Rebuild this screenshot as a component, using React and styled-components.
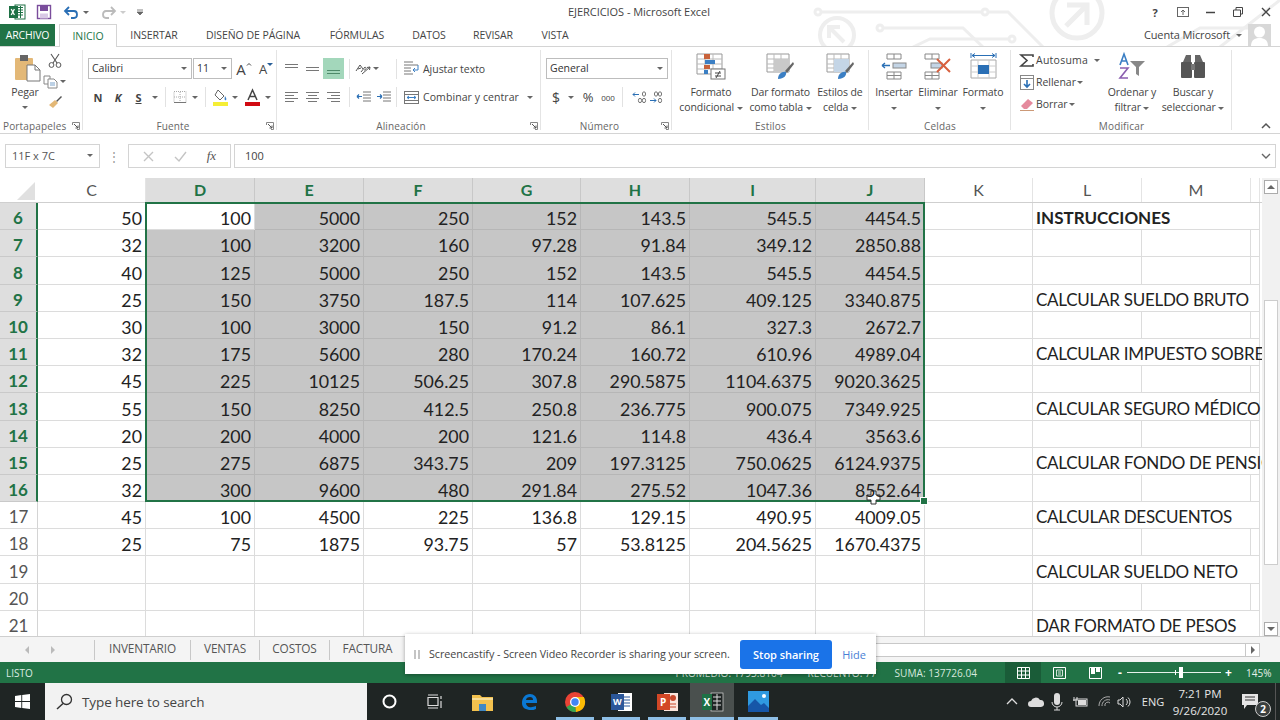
import React from "react";
import styled, { createGlobalStyle } from "styled-components";

const GREEN = "#217346";
const UI = `"Open Sans", "Noto Sans", sans-serif`;
const CELL = `"Lato", "Open Sans", sans-serif`;
const COLS = "38px 108px 109px 109px 109px 108px 109px 126px 109px 108px 109px 109px 9px";

const Global = createGlobalStyle`
  html, body { margin: 0; padding: 0; background: #fff; overflow: hidden; }
  #root { width: 1280px; height: 720px; }
  * { box-sizing: border-box; }
  svg { overflow: visible; flex: none; }
`;

const Shell = styled.div`
  position: relative; width: 1280px; height: 720px; overflow: hidden; display: flex; flex-direction: column;
  font-family: ${UI}; font-size: 10.5px; color: #444; background: #fff;
`;
const Watermark = styled.svg`position: absolute; left: 780px; top: 0; width: 500px; height: 47px; pointer-events: none; overflow: hidden;`;
const TitleBar = styled.div`position: relative; height: 24px; display: grid; grid-template-columns: 1fr auto 1fr; align-items: center;`;
const QuickAccess = styled.div`display: flex; align-items: center; padding-left: 9px;`;
const TitleText = styled.div`font-size: 11px; color: #444; letter-spacing: -0.05px; margin-left: -2px; padding-bottom: 1px;`;
const WindowButtons = styled.div`display: flex; align-items: center; justify-content: flex-end;`;
const Slot = styled.div`
  width: ${p => p.$w}px; flex: none; display: flex; align-items: center; justify-content: center;
  height: ${p => p.$h ? p.$h + "px" : "auto"}; background: ${p => p.$bg || "transparent"};
`;
const TabsRow = styled.div`position: relative; height: 23px; display: flex; align-items: stretch; border-bottom: 1px solid #d4d4d4;`;
const FileTab = styled.div`width: 55px; background: ${GREEN}; color: #fff; display: flex; align-items: center; justify-content: center; font-size: 10.5px; letter-spacing: -0.2px; margin-right: 4px;`;
const Tab = styled.div`
  width: ${p => p.$w}px; display: flex; align-items: center; justify-content: center; letter-spacing: -0.06px;
  color: ${p => p.$active ? GREEN : "#444"}; background: ${p => p.$active ? "#fff" : "transparent"};
  ${p => p.$active ? "border: 1px solid #d4d4d4; border-bottom: 0; margin-bottom: -1px;" : ""}
`;
const Spacer = styled.div`flex: 1;`;
const Account = styled.div`display: flex; align-items: center; gap: 6px; padding-right: 9px; font-size: 11px; letter-spacing: -0.12px; line-height: 20px;`;
const Avatar = styled.div`width: 23px; height: 22px; background: #d8d8d8; display: flex; justify-content: center; align-items: flex-end; overflow: hidden;`;

const Ribbon = styled.div`height: 87px; display: flex; border-bottom: 1px solid #d4d4d4; flex: none;`;
const Group = styled.div`
  width: ${p => p.$w}px; flex: none; display: flex; flex-direction: column; position: relative;
  &::after { content: ""; position: absolute; right: 0; top: 3px; bottom: 3px; width: 1px; background: #e4e4e4; }
`;
const GroupBody = styled.div`height: 71px; flex: none; display: flex; padding-left: ${p => p.$pl || 0}px;`;
const GroupLabel = styled.div`
  height: 15px; font-size: 10px; color: #666; letter-spacing: .15px; flex: none;
  display: flex; align-items: center; justify-content: ${p => p.$left ? "flex-start" : "center"};
  padding-left: ${p => p.$left ? 3 : 0}px; padding-right: ${p => p.$pr || 0}px;
`;
const Launcher = styled.svg`position: absolute; right: 3px; bottom: 3px; width: 8px; height: 8px;`;
const BigColumn = styled.div`width: ${p => p.$w}px; flex: none; display: flex; flex-direction: column; align-items: center; padding-top: ${p => p.$pt ?? 4}px;`;
const BigLabel = styled.div`font-size: 10.5px; line-height: 15px; text-align: center; white-space: nowrap; letter-spacing: -0.1px; color: #444;`;
const IconWrap = styled.div`height: 31px; display: flex; align-items: center; justify-content: center; margin-bottom: 3px;`;
const PasteWrap = styled.div`height: 29px; margin-left: 4px; margin-bottom: 2px;`;
const Stack = styled.div`display: flex; flex-direction: column; align-items: ${p => p.$align || "center"}; width: ${p => p.$w ? p.$w + "px" : "auto"}; flex: none; padding-top: ${p => p.$pt || 0}px; gap: ${p => p.$gap || 0}px;`;
const ToolRow = styled.div`display: flex; align-items: center; height: ${p => p.$h || 20}px; margin-top: ${p => p.$mt || 0}px;`;
const Caret = styled.span`display: inline-block; width: 0; height: 0; vertical-align: middle; border-left: 3px solid transparent; border-right: 3px solid transparent; border-top: 3px solid ${p => p.$c || "#666"}; flex: none;`;
const Select = styled.div`
  width: ${p => p.$w}px; height: 21px; border: 1px solid #bdbdbd; background: #fff; display: flex; align-items: center;
  justify-content: space-between; padding: 0 4px 1px 3px; font-size: 10.5px; color: #333; flex: none; margin-left: ${p => p.$ml || 0}px;
`;
const VSep = styled.div`width: 1px; height: 20px; background: #e2e2e2; flex: none;`;
const Letter = styled.span`font-weight: ${p => p.$light ? 400 : 700}; font-size: ${p => p.$size || 11}px; color: #444; font-style: ${p => p.$i ? "italic" : "normal"}; text-decoration: ${p => p.$u ? "underline" : "none"};`;
const GrowLetter = styled.span`font-size: ${p => p.$size}px; line-height: 16px; color: #444;`;
const ToolText = styled.span`font-size: 10.5px; color: #444; letter-spacing: ${p => p.$ls || -0.03}px; white-space: nowrap;`;
const CollapseSlot = styled.div`flex: 1; display: flex; justify-content: flex-end; align-items: flex-end; padding: 0 9px 4px 0;`;

const FormulaArea = styled.div`height: 44px; flex: none; display: flex; align-items: flex-start; padding: 10px 4px 0 5px;`;
const NameBox = styled.div`width: 95px; height: 24px; border: 1px solid #d4d4d4; display: flex; align-items: center; justify-content: space-between; padding: 0 6px 1px; font-size: 11px; color: #555; flex: none;`;
const Dots = styled.div`width: 28px; height: 24px; display: flex; align-items: center; justify-content: center; color: #999; flex: none; font-size: 12px;`;
const FxBox = styled.div`width: 103px; height: 24px; border: 1px solid #d4d4d4; display: flex; align-items: center; justify-content: space-around; padding: 0 4px; flex: none; margin-right: 3px;`;
const FxText = styled.span`font-family: "Liberation Serif", serif; font-style: italic; font-size: 13px; color: #555;`;
const FormulaInput = styled.div`flex: 1; height: 24px; border: 1px solid #d4d4d4; display: flex; align-items: center; justify-content: space-between; padding: 0 4px 1px 10px; font-size: 11px; color: #444;`;

const SheetArea = styled.div`flex: none; height: 458px; display: flex;`;
const GridArea = styled.div`width: 1262px; flex: none; position: relative; display: flex; flex-direction: column; font-family: ${CELL};`;
const HeaderRow = styled.div`height: 25px; display: grid; grid-template-columns: ${COLS}; flex: none; border-bottom: 1px solid #cfcfcf;`;
const Corner = styled.div`display: flex; align-items: flex-end; justify-content: flex-end; padding: 0 3px 2px 0; background: #fff;`;
const ColHead = styled.div`
  display: flex; align-items: center; justify-content: center; font-size: 16px; padding-bottom: 1px;
  color: ${p => p.$sel ? GREEN : "#555"}; font-weight: ${p => p.$sel ? 700 : 400};
  background: ${p => p.$sel ? "#dedede" : "#fff"}; border-right: 1px solid ${p => p.$sel ? "#c8c8c8" : "#e4e4e4"};
`;
const GridBody = styled.div`height: 433px; overflow: hidden; flex: none;`;
const SheetRow = styled.div`height: 27.2px; display: grid; grid-template-columns: ${COLS};`;
const RowHead = styled.div`
  display: flex; align-items: flex-end; justify-content: center; font-size: 17px; padding-bottom: 1px; line-height: 20px;
  color: ${p => p.$sel ? GREEN : "#555"}; font-weight: ${p => p.$sel ? 700 : 400};
  background: ${p => p.$sel ? "#dedede" : "#fff"};
  border-bottom: 1px solid ${p => p.$sel ? "#c9c9c9" : "#dcdcdc"};
  border-right: ${p => p.$sel ? `2px solid ${GREEN}` : "1px solid #d4d4d4"};
`;
const Cell = styled.div`
  display: flex; align-items: flex-end; justify-content: ${p => p.$text ? "flex-start" : "flex-end"}; font-size: ${p => p.$text ? 17 : 17.8}px; line-height: 21px;
  padding: 0 3px ${p => p.$text ? 1 : 0}px 3px; color: #222; white-space: nowrap; position: relative; font-weight: ${p => p.$bold ? 700 : 400};
  background: ${p => p.$sel ? "#c6c6c6" : "#fff"};
  border-bottom: 1px solid ${p => p.$sel ? "#b6b6b6" : "#dcdcdc"};
  border-right: ${p => p.$noRight ? "0" : `1px solid ${p.$sel ? "#b6b6b6" : "#dcdcdc"}`};
`;
const CellText = styled.span`letter-spacing: ${p => p.$ls || 0}px; position: relative; z-index: 2;`;
const Selection = styled.div`position: absolute; left: 145px; top: 24px; width: 780px; height: 300px; border: 2px solid ${GREEN}; pointer-events: none;`;
const Handle = styled.div`position: absolute; right: -4px; bottom: -4px; width: 6px; height: 6px; background: ${GREEN}; outline: 1px solid #fff;`;
const CursorPlus = styled.svg`position: absolute; left: 866px; top: 312px; width: 15px; height: 15px;`;
const VScroll = styled.div`width: 18px; flex: none; display: flex; flex-direction: column; align-items: center; padding-top: 2px; background: #f1f1f1;`;
const ScrollButton = styled.div`width: 14px; height: 14px; background: #fff; border: 1px solid #ababab; display: flex; align-items: center; justify-content: center; flex: none;`;
const Thumb = styled.div`width: 14px; height: 266px; background: #fff; border: 1px solid #cdcdcd; margin: 106px 0 57px;`;
const UpTri = styled.span`width: 0; height: 0; border-left: 4px solid transparent; border-right: 4px solid transparent; border-bottom: 4px solid #666;`;
const DownTri = styled.span`width: 0; height: 0; border-left: 4px solid transparent; border-right: 4px solid transparent; border-top: 4px solid #666;`;

const SheetTabs = styled.div`height: 26px; flex: none; display: flex; align-items: center; background: #f4f4f4; border-top: 1px solid #cfcfcf;`;
const NavArrows = styled.div`width: 94px; display: flex; align-items: center; padding-left: 25px; gap: 22px; flex: none;`;
const SheetTab = styled.div`
  width: ${p => p.$w}px; height: 20px; display: flex; align-items: center; justify-content: center; flex: none; font-size: 11.8px; letter-spacing: -0.15px; color: #555; padding-bottom: 3px;
  border-left: 1px solid #c8c8c8;
`;
const HScroll = styled.div`margin-left: auto; margin-right: 20px; width: 390px; height: 14px; background: #fff; border: 1px solid #c8c8c8; display: flex; justify-content: flex-end;`;
const HEnd = styled.div`width: 14px; border-left: 1px solid #c8c8c8; display: flex; align-items: center; justify-content: center;`;
const LeftTri = styled.span`width: 0; height: 0; border-top: 4px solid transparent; border-bottom: 4px solid transparent; border-right: 4px solid #bbb;`;
const RightTri = styled.span`width: 0; height: 0; border-top: 4px solid transparent; border-bottom: 4px solid transparent; border-left: 4px solid ${p => p.$c || "#bbb"};`;

const Status = styled.div`height: 21px; flex: none; background: ${GREEN}; color: #dcebe3; font-size: 10px; display: flex; align-items: center; padding-left: 6px;`;
const StatusStat = styled.span`white-space: nowrap; font-size: 10.1px; color: #d6e8de;`;
const ZoomLevel = styled.span`white-space: nowrap; font-size: 10px; color: #e6f0ea; width: 26px; flex: none;`;
const ViewButton = styled.div`width: 36px; height: 21px; display: flex; align-items: center; justify-content: center; background: ${p => p.$active ? "#1a5c38" : "transparent"}; flex: none;`;
const Slider = styled.div`width: 94px; height: 1px; background: #e8f1ec; position: relative; margin: 0 4px 0 5px; flex: none;`;
const SliderKnob = styled.div`position: absolute; left: 52px; top: -5px; width: 4px; height: 11px; background: #fff;`;
const SliderTick = styled.div`position: absolute; left: 48px; top: -2px; width: 1px; height: 5px; background: #fff;`;
const ZoomSign = styled.span`color: #fff; font-weight: 700; font-size: 12px; line-height: 12px; width: ${p => p.$w}px; text-align: center; flex: none;`;

const Taskbar = styled.div`height: 37px; flex: none; background: #1f2524; display: flex; align-items: center; color: #e6e6e6;`;
const StartBtn = styled.div`width: 45px; height: 37px; display: flex; align-items: center; justify-content: center; flex: none;`;
const SearchBox = styled.div`width: 322px; height: 37px; background: #f2f2f2; display: flex; align-items: center; gap: 9px; padding-left: 11px; font-size: 13.5px; color: #444; flex: none; letter-spacing: -0.1px;`;
const TaskItem = styled.div`
  width: ${p => p.$w || 46}px; height: 37px; display: flex; align-items: center; justify-content: center; position: relative; flex: none;
  background: ${p => p.$active ? "#4a504e" : "transparent"}; padding-right: ${p => p.$pr || 0}px;
  ${p => p.$open ? `&::after { content: ""; position: absolute; left: ${p.$active ? 0 : 4}px; right: ${p.$active ? 0 : 4}px; bottom: 0; height: 3px; background: #8ebfe6; }` : ""}
`;
const Tray = styled.div`margin-left: auto; display: flex; align-items: center; height: 37px; margin-right: 4px; border-right: 1px solid #555;`;
const Clock = styled.div`width: 68px; text-align: center; font-size: 11.5px; line-height: 17px; color: #e6e6e6; flex: none; white-space: nowrap;`;
const Eng = styled.div`font-size: 11px; width: 26px; text-align: center; flex: none;`;
const NotifBadge = styled.div`position: absolute; right: 4px; bottom: 3px; width: 16px; height: 16px; border-radius: 50%; background: #3a3f3e; border: 1px solid #ccc; font-size: 10px; font-weight: 700; color: #fff; display: flex; align-items: center; justify-content: center;`;

const Cast = styled.div`position: absolute; left: 405px; top: 634px; width: 471px; height: 40px; background: #fff; display: flex; align-items: center; box-shadow: 0 1px 4px rgba(0,0,0,.35); font-size: 10.75px; color: #444; letter-spacing: -0.05px;`;
const CastPause = styled.div`width: 24px; display: flex; justify-content: center; gap: 2px; flex: none;`;
const PauseBar = styled.span`width: 2px; height: 9px; background: #c4c4c4;`;
const CastText = styled.div`width: 311px; white-space: nowrap; flex: none;`;
const StopButton = styled.div`width: 92px; height: 29px; border-radius: 3px; background: #1a73e8; color: #fff; font-weight: 600; display: flex; align-items: center; justify-content: center; flex: none; font-size: 11px;`;
const HideLink = styled.div`flex: 1; text-align: center; color: #4a7fd6; font-size: 11px;`;

const Svg = ({ w, h, children, ...r }) => <svg width={w} height={h} viewBox={`0 0 ${w} ${h}`} {...r}>{children}</svg>;

const ExcelLogo = () => (
  <Svg w={16} h={16}>
    <rect x="6" y="1" width="10" height="14" fill="#fff" stroke="#1e7145" />
    <path d="M9 3.5h5M9 6h5M9 8.5h5M9 11h5M11.5 2v12" stroke="#1e7145" strokeWidth="1" />
    <rect x="0" y="2" width="9" height="12" fill="#1e7145" />
    <path d="M2.2 5l3.2 6M5.4 5l-3.2 6" stroke="#fff" strokeWidth="1.3" />
  </Svg>
);
const Lines = ({ rows, w = 14, h = 12, c = "#777" }) => (
  <Svg w={w} h={h}>
    {rows.map(([y, x0, x1], i) => <path key={i} d={`M${x0} ${y + .5}H${x1}`} stroke={c} />)}
  </Svg>
);
const LaunchIcon = () => (
  <Launcher viewBox="0 0 8 8"><path d="M.5 3V.5H7.5V7.5H5" fill="none" stroke="#888" /><path d="M2 2L6 6M6 3.5V6H3.5" fill="none" stroke="#555" /></Launcher>
);

const Paste = () => (
  <Svg w={27} h={28}>
    <rect x="1" y="4" width="18" height="22" rx="1" fill="#e3b877" />
    <rect x="6" y="1" width="8" height="6" fill="#666" />
    <path d="M13 11h8l5 5v11H13z" fill="#fff" stroke="#777" />
    <path d="M21 11v5h5" fill="none" stroke="#777" />
  </Svg>
);
const Scissors = () => (
  <Svg w={14} h={15}><path d="M3 1l6 9M11 1L5 10" stroke="#555" strokeWidth="1.1" fill="none" /><circle cx="3.5" cy="12" r="2.4" fill="none" stroke="#555" /><circle cx="10.5" cy="12" r="2.4" fill="none" stroke="#555" /></Svg>
);
const Copy = () => (
  <Svg w={15} h={14}><path d="M1 1h6v8H1z" fill="#fff" stroke="#888" /><path d="M5 4h6l3 3v6H5z" fill="#fff" stroke="#888" /><path d="M7 8h5M7 10h5" stroke="#7aa3cc" /></Svg>
);
const Brush = () => (
  <Svg w={15} h={14}><path d="M8 6l5-5 1 1-5 5z" fill="#555" /><path d="M1 10l6-5 3 3-5 5z" fill="#e3b877" /></Svg>
);
const Borders = () => (
  <Svg w={14} h={14}><rect x="1" y="1.5" width="12" height="11" fill="none" stroke="#aaa" strokeDasharray="1 1" /><path d="M7 2v10M1 7h12" stroke="#aaa" strokeDasharray="1 1" /><path d="M1 12.5h12" stroke="#777" /></Svg>
);
const Bucket = () => (
  <Svg w={17} h={17}><path d="M6 1l6 6-4 4-5-5z" fill="#fff" stroke="#666" /><path d="M13 7c1 2 2 3 1 4s-2 0-1-4z" fill="#3b7fc4" /><rect x="1" y="13" width="15" height="4" fill="#f5ee35" /></Svg>
);
const FontColor = () => (
  <Svg w={15} h={17}><path d="M3 11L7.5 1 12 11M5 7.5h5" fill="none" stroke="#444" strokeWidth="1.5" /><rect y="13" width="15" height="4" fill="#d10a12" /></Svg>
);
const Orient = () => (
  <Svg w={17} h={14}><path d="M1 9l4-6 3 4M3 7l3-1M6 10l4-5c2 1 1 3-1 3M7 12L15 5M15 5l-3 .5M15 5l-.5 3" stroke="#555" fill="none" /></Svg>
);
const Wrap = () => (
  <Svg w={16} h={15}><path d="M1 1h9M1 4h14M1 7h7M1 10h7M1 13h9" stroke="#777" /><path d="M15 4v5h-5m2-2l-2 2 2 2" stroke="#3b7fc4" fill="none" /></Svg>
);
const Merge = () => (
  <Svg w={15} h={15}><rect x=".5" y="1.5" width="14" height="12" fill="#fff" stroke="#777" /><path d="M.5 4.5h14M.5 10.5h14" stroke="#777" /><path d="M3 7.5h9M3 7.5l2-1.5M3 7.5L5 9M12 7.5L10 6M12 7.5L10 9" stroke="#3b7fc4" fill="none" /></Svg>
);
const Indent = ({ rev }) => (
  <Svg w={15} h={12}><path d="M7 1h8M7 4h8M7 7h8M7 10h8" stroke="#777" /><path d={rev ? "M1 5.5h5M6 5.5L4 3.5M6 5.5L4 7.5" : "M1 5.5h5M1 5.5L3 3.5M1 5.5L3 7.5"} stroke="#2a6fb5" fill="none" strokeWidth="1.2" /></Svg>
);
const Zero = ({ x, y }) => <ellipse cx={x} cy={y} rx="1.6" ry="2.2" fill="none" stroke="#666" strokeWidth=".9" />;
const DecIncrease = () => (
  <Svg w={15} h={12}><Zero x={11} y={3} /><Zero x={7} y={9.5} /><Zero x={11} y={9.5} /><path d="M0 3.5h6M0 3.5l2-2M0 3.5l2 2" stroke="#2a6fb5" fill="none" /></Svg>
);
const DecDecrease = () => (
  <Svg w={15} h={12}><Zero x={7} y={3} /><Zero x={11} y={3} /><Zero x={11} y={9.5} /><path d="M1 9.5h6M7 9.5l-2-2M7 9.5l-2 2" stroke="#2a6fb5" fill="none" /></Svg>
);
const CondFormat = () => (
  <Svg w={30} h={27}>
    <path d="M1 1h25v20H1z" fill="#fff" stroke="#999" /><path d="M1 6h25M1 11h25M1 16h25M9 1v20M17 1v20" stroke="#bbb" />
    <rect x="8" y="1" width="6" height="5" fill="#c8623a" /><rect x="9" y="7" width="10" height="4" fill="#3b7fc4" /><rect x="8" y="12" width="6" height="4" fill="#c8623a" /><rect x="8" y="17" width="4" height="4" fill="#3b7fc4" />
    <rect x="15" y="16" width="14" height="10" fill="#fff" stroke="#777" /><path d="M19 20h6M19 23h6M24 18l-4 7" stroke="#444" />
  </Svg>
);
const TableFormat = ({ light }) => (
  <Svg w={29} h={27}>
    <path d="M1 1h22v18H1z" fill="#fff" stroke="#999" /><path d="M1 6h22M1 11h22M1 15h22M8 1v18M15 1v18" stroke="#bbb" />
    <rect x="8" y="6" width="15" height="13" fill={light ? "#c4d5e6" : "#c9c9c9"} />
    <path d="M19 18l8-9 1 2-7 9z" fill="#666" /><path d="M12 26c0-5 4-8 8-7 1 3-2 7-8 7z" fill="#3b7fc4" />
  </Svg>
);
const InsertCells = () => (
  <Svg w={26} h={27}>
    <path d="M6 1h14v5H6zM13 1v5M6 19h14v7H6zM13 19v7M6 22.5h14" fill="none" stroke="#888" />
    <rect x="12" y="10" width="13" height="5" fill="#c4d5e6" stroke="#888" /><path d="M1 12.5h8M1 12.5l3-2.5M1 12.5l3 2.5" stroke="#2a6fb5" fill="none" strokeWidth="1.3" />
  </Svg>
);
const DeleteCells = () => (
  <Svg w={28} h={27}>
    <path d="M1 1h14v5H1zM8 1v5M1 19h14v7H1zM8 19v7M1 22.5h14" fill="none" stroke="#888" />
    <rect x="7" y="10" width="11" height="5" fill="#c4d5e6" stroke="#888" /><path d="M13 6l13 13M26 6L13 19" stroke="#d8603f" strokeWidth="2" />
  </Svg>
);
const FormatCells = () => (
  <Svg w={27} h={30}>
    <path d="M1 1v5M26 1v5M2 3.5h23M2 3.5l3-2M2 3.5l3 2M25 3.5l-3-2M25 3.5l-3 2" stroke="#2a6fb5" fill="none" />
    <path d="M1 8h25v18H1z" fill="#fff" stroke="#aaa" /><path d="M1 14h25M1 20h25M8 8v18M19 8v18" stroke="#ccc" />
    <rect x="8" y="13" width="11" height="9" fill="#2a6fb5" />
  </Svg>
);
const Sigma = () => <Svg w={14} h={13}><path d="M13 3V1H1l6 5.5L1 12h12v-2" fill="none" stroke="#444" strokeWidth="1.6" /></Svg>;
const Fill = () => <Svg w={14} h={15}><rect x=".5" y=".5" width="13" height="14" fill="#fff" stroke="#888" /><path d="M.5 3.5h13" stroke="#888" /><path d="M7 5v7M4 9l3 3 3-3" stroke="#2a6fb5" strokeWidth="1.6" fill="none" /></Svg>;
const Eraser = () => <Svg w={14} h={13}><path d="M1 8l7-7 5 4-6 6H4z" fill="#e58a9d" /><path d="M0 12.5h14" stroke="#c97" /></Svg>;
const SortFilter = () => (
  <Svg w={28} h={27}>
    <path d="M2 12L6 1l4 11M3.5 8h5" fill="none" stroke="#3b7fc4" strokeWidth="1.6" />
    <path d="M2 15h8L2 25h8" fill="none" stroke="#8b5fb0" strokeWidth="1.6" />
    <path d="M12 8h15l-6 6v9l-3-2v-7z" fill="#888" />
  </Svg>
);
const Binoculars = () => (
  <Svg w={26} h={25}><path d="M3 8l3-7h5v7zM15 8V1h5l3 7z" fill="#666" /><rect x="1" y="8" width="11" height="16" rx="1" fill="#555" /><rect x="14" y="8" width="11" height="16" rx="1" fill="#555" /><rect x="11" y="10" width="4" height="6" fill="#777" /></Svg>
);

const Circuit = () => (
  <Watermark viewBox="0 0 500 47">
    <g fill="none" stroke="#eeeeee" strokeWidth="3">
      <circle cx="38" cy="12" r="3" />
      <path d="M41 12H202" />
      <circle cx="205" cy="12" r="3" />
      <path d="M208 12H228L263 47" />
      <circle cx="100" cy="28" r="3" />
      <path d="M103 28H183L203 47" />
      <circle cx="232" cy="39" r="3" />
      <path d="M229 39H150L133 47" />
      <circle cx="57" cy="35" r="17" strokeWidth="4" />
      <path d="M49 38V27H60M49 27L64 42" strokeWidth="4" />
      <circle cx="297" cy="13" r="25" strokeWidth="5" />
      <path d="M287 5h20v20M307 5L286 26" strokeWidth="5" />
      <path d="M387 47L420 28H480" />
      <path d="M440 47L500 0" />
    </g>
  </Watermark>
);

const columns = ["C", "D", "E", "F", "G", "H", "I", "J", "K", "L", "M"];
const rows = [
  [6, [50, 100, 5000, 250, 152, 143.5, 545.5, 4454.5], "INSTRUCCIONES", true],
  [7, [32, 100, 3200, 160, 97.28, 91.84, 349.12, 2850.88]],
  [8, [40, 125, 5000, 250, 152, 143.5, 545.5, 4454.5]],
  [9, [25, 150, 3750, 187.5, 114, 107.625, 409.125, 3340.875], "CALCULAR SUELDO BRUTO"],
  [10, [30, 100, 3000, 150, 91.2, 86.1, 327.3, 2672.7]],
  [11, [32, 175, 5600, 280, 170.24, 160.72, 610.96, 4989.04], "CALCULAR IMPUESTO SOBRE"],
  [12, [45, 225, 10125, 506.25, 307.8, 290.5875, 1104.6375, 9020.3625]],
  [13, [55, 150, 8250, 412.5, 250.8, 236.775, 900.075, 7349.925], "CALCULAR SEGURO MÉDICO"],
  [14, [20, 200, 4000, 200, 121.6, 114.8, 436.4, 3563.6]],
  [15, [25, 275, 6875, 343.75, 209, 197.3125, 750.0625, 6124.9375], "CALCULAR FONDO DE PENSIONES"],
  [16, [32, 300, 9600, 480, 291.84, 275.52, 1047.36, 8552.64]],
  [17, [45, 100, 4500, 225, 136.8, 129.15, 490.95, 4009.05], "CALCULAR DESCUENTOS"],
  [18, [25, 75, 1875, 93.75, 57, 53.8125, 204.5625, 1670.4375]],
  [19, [], "CALCULAR SUELDO NETO"],
  [20, []],
  [21, [], "DAR FORMATO DE PESOS"],
];

const SheetRowView = ({ n, vals, note, bold }) => {
  const selRow = n >= 6 && n <= 16;
  return (
    <SheetRow>
      <RowHead $sel={selRow}>{n}</RowHead>
      {Array.from({ length: 8 }).map((_, i) => (
        <Cell key={i} $sel={selRow && i >= 1 && !(n === 6 && i === 1)}><CellText>{vals[i]}</CellText></Cell>
      ))}
      <Cell />
      <Cell $text $bold={bold} $noRight={!!note}><CellText $ls={bold ? 0 : -0.27}>{note}</CellText></Cell>
      <Cell $noRight={!!note} />
      <Cell />
    </SheetRow>
  );
};

export default function App() {
  return (
    <Shell>
      <Global />
      <Circuit />
      <TitleBar>
        <QuickAccess>
          <ExcelLogo />
          <Slot $w={12} />
          <Svg w={14} h={14}><rect x=".5" y=".5" width="13" height="13" fill="#fff" stroke="#7a4d9c" strokeWidth="1.4" /><rect x="3" y="1" width="8" height="5" fill="#7a4d9c" /><rect x="3" y="8.5" width="8" height="5" fill="#d9c9e6" /></Svg>
          <Slot $w={13} />
          <Svg w={15} h={13}><path d="M2 5h8c4 0 4 7 0 7H7" fill="none" stroke="#2a6fb5" strokeWidth="1.8" /><path d="M5 1L1 5l4 4" fill="none" stroke="#2a6fb5" strokeWidth="1.8" /></Svg>
          <Slot $w={14}><Caret /></Slot>
          <Slot $w={8} />
          <Svg w={15} h={13}><path d="M13 5H5c-4 0-4 7 0 7h3" fill="none" stroke="#bbb" strokeWidth="1.8" /><path d="M10 1l4 4-4 4" fill="none" stroke="#bbb" strokeWidth="1.8" /></Svg>
          <Slot $w={13}><Caret $c="#ccc" /></Slot>
          <Slot $w={8} />
          <Svg w={7} h={7}><path d="M0 1h6M0 3l3 3 3-3z" stroke="#666" fill="#666" strokeWidth=".8" /></Svg>
        </QuickAccess>
        <TitleText>EJERCICIOS - Microsoft Excel</TitleText>
        <WindowButtons>
          <Slot $w={28}><Letter>?</Letter></Slot>
          <Slot $w={28}><Svg w={12} h={10}><rect x=".5" y=".5" width="11" height="9" fill="none" stroke="#666" /><path d="M6 8V3M4 5l2-2 2 2M1 .5h10" stroke="#666" fill="none" /></Svg></Slot>
          <Slot $w={27}><Svg w={9} h={3}><path d="M0 1.5h9" stroke="#444" strokeWidth="1.5" /></Svg></Slot>
          <Slot $w={28}><Svg w={10} h={10}><path d="M.5 3h7v6.5h-7zM3 3V.5h6.5V7H8" fill="none" stroke="#444" /></Svg></Slot>
          <Slot $w={28}><Svg w={10} h={10}><path d="M1 1l8 8M9 1L1 9" stroke="#444" strokeWidth="1.4" /></Svg></Slot>
        </WindowButtons>
      </TitleBar>

      <TabsRow>
        <FileTab>ARCHIVO</FileTab>
        <Tab $w={58} $active>INICIO</Tab>
        <Tab $w={74}>INSERTAR</Tab>
        <Tab $w={124}>DISEÑO DE PÁGINA</Tab>
        <Tab $w={84}>FÓRMULAS</Tab>
        <Tab $w={60}>DATOS</Tab>
        <Tab $w={68}>REVISAR</Tab>
        <Tab $w={56}>VISTA</Tab>
        <Spacer />
        <Account>
          Cuenta Microsoft <Caret />
          <Avatar><Svg w={17} h={21}><circle cx="8.5" cy="7" r="5.5" fill="#fff" /><path d="M0 21c0-6 4-8 8.5-8S17 15 17 21z" fill="#fff" /></Svg></Avatar>
        </Account>
      </TabsRow>

      <Ribbon>
        <Group $w={83}>
          <GroupBody $pl={9}>
            <BigColumn $w={32} $pt={7}>
              <PasteWrap><Paste /></PasteWrap>
              <BigLabel>Pegar</BigLabel>
              <Slot $w={10} $h={14}><Caret /></Slot>
            </BigColumn>
            <Stack $w={28} $pt={6} $gap={6}>
              <Scissors />
              <ToolRow $h={15}><Copy /><Slot $w={10}><Caret /></Slot></ToolRow>
              <Brush />
            </Stack>
          </GroupBody>
          <GroupLabel $left>Portapapeles</GroupLabel>
          <LaunchIcon />
        </Group>

        <Group $w={194}>
          <GroupBody $pl={5}>
            <Stack $align="flex-start" $pt={11}>
              <ToolRow $h={21}>
                <Select $w={104}>Calibri<Caret /></Select>
                <Select $w={39} $ml={1}>11<Caret /></Select>
                <Slot $w={24}><GrowLetter $size={15}>A</GrowLetter><Svg w={6} h={4} style={{ marginBottom: 9 }}><path d="M1 3.5l2-2 2 2" stroke="#444" fill="none" /></Svg></Slot>
                <Slot $w={20}><GrowLetter $size={13}>A</GrowLetter><Svg w={6} h={4} style={{ marginBottom: 9 }}><path d="M0 1h6L3 4z" fill="#2a6099" /></Svg></Slot>
              </ToolRow>
              <ToolRow $h={20} $mt={8}>
                <Slot $w={20}><Letter>N</Letter></Slot>
                <Slot $w={20}><Letter $i>K</Letter></Slot>
                <Slot $w={21}><Letter $u>S</Letter></Slot>
                <Slot $w={11}><Caret /></Slot>
                <Slot $w={10}><VSep /></Slot>
                <Slot $w={19}><Borders /></Slot>
                <Slot $w={12}><Caret /></Slot>
                <Slot $w={8}><VSep /></Slot>
                <Slot $w={22}><Bucket /></Slot>
                <Slot $w={8}><Caret /></Slot>
                <Slot $w={26}><FontColor /></Slot>
                <Slot $w={6}><Caret /></Slot>
              </ToolRow>
            </Stack>
          </GroupBody>
          <GroupLabel $pr={14}>Fuente</GroupLabel>
          <LaunchIcon />
        </Group>

        <Group $w={264}>
          <GroupBody $pl={5}>
            <Stack $align="flex-start" $pt={11}>
              <ToolRow $h={21}>
                <Slot $w={20}><Lines rows={[[1, 0, 13], [4, 0, 13]]} /></Slot>
                <Slot $w={21}><Lines rows={[[4, 0, 13], [7, 0, 13]]} /></Slot>
                <Slot $w={21} $h={21} $bg="#a3d7bb"><Lines rows={[[7, 0, 13], [10, 0, 13]]} c="#4e8a6a" /></Slot>
                <Slot $w={10}><VSep /></Slot>
                <Slot $w={18}><Orient /></Slot>
                <Slot $w={8}><Caret /></Slot>
                <Slot $w={16} />
                <VSep />
                <Slot $w={5} />
                <Slot $w={18}><Wrap /></Slot>
                <Slot $w={3} />
                <ToolText>Ajustar texto</ToolText>
              </ToolRow>
              <ToolRow $h={20} $mt={8}>
                <Slot $w={20}><Lines rows={[[1, 0, 13], [4, 0, 9], [7, 0, 13], [10, 0, 9]]} /></Slot>
                <Slot $w={21}><Lines rows={[[1, 0, 13], [4, 2, 11], [7, 0, 13], [10, 2, 11]]} /></Slot>
                <Slot $w={21}><Lines rows={[[1, 0, 13], [4, 4, 13], [7, 0, 13], [10, 4, 13]]} /></Slot>
                <Slot $w={10}><VSep /></Slot>
                <Slot $w={18}><Indent /></Slot>
                <Slot $w={22}><Indent rev /></Slot>
                <Slot $w={2} />
                <VSep />
                <Slot $w={5} />
                <Slot $w={18}><Merge /></Slot>
                <Slot $w={3} />
                <ToolText $ls={0.08}>Combinar y centrar</ToolText>
                <Slot $w={22}><Caret /></Slot>
              </ToolRow>
            </Stack>
          </GroupBody>
          <GroupLabel $pr={16}>Alineación</GroupLabel>
          <LaunchIcon />
        </Group>

        <Group $w={131}>
          <GroupBody $pl={5}>
            <Stack $align="flex-start" $pt={11}>
              <ToolRow $h={21}><Select $w={122}>General<Caret /></Select></ToolRow>
              <ToolRow $h={20} $mt={8}>
                <Slot $w={20}><Letter $light $size={14}>$</Letter></Slot>
                <Slot $w={10}><Caret /></Slot>
                <Slot $w={24}><Letter $light $size={13}>%</Letter></Slot>
                <Slot $w={16}><Letter $light $size={8}>000</Letter></Slot>
                <Slot $w={12}><VSep /></Slot>
                <Slot $w={4} />
                <Slot $w={16}><DecIncrease /></Slot>
                <Slot $w={16}><DecDecrease /></Slot>
              </ToolRow>
            </Stack>
          </GroupBody>
          <GroupLabel $pr={14}>Número</GroupLabel>
          <LaunchIcon />
        </Group>

        <Group $w={197}>
          <GroupBody $pl={2}>
            <BigColumn $w={74}><IconWrap><CondFormat /></IconWrap><BigLabel>Formato<br />condicional <Caret /></BigLabel></BigColumn>
            <BigColumn $w={65}><IconWrap><TableFormat /></IconWrap><BigLabel>Dar formato<br />como tabla <Caret /></BigLabel></BigColumn>
            <BigColumn $w={54}><IconWrap><TableFormat light /></IconWrap><BigLabel>Estilos de<br />celda <Caret /></BigLabel></BigColumn>
          </GroupBody>
          <GroupLabel>Estilos</GroupLabel>
        </Group>

        <Group $w={142}>
          <GroupBody $pl={3}>
            <BigColumn $w={44}><IconWrap><InsertCells /></IconWrap><BigLabel>Insertar<br /><Caret /></BigLabel></BigColumn>
            <BigColumn $w={44}><IconWrap><DeleteCells /></IconWrap><BigLabel>Eliminar<br /><Caret /></BigLabel></BigColumn>
            <BigColumn $w={46}><IconWrap><FormatCells /></IconWrap><BigLabel>Formato<br /><Caret /></BigLabel></BigColumn>
          </GroupBody>
          <GroupLabel>Celdas</GroupLabel>
        </Group>

        <Group $w={221}>
          <GroupBody $pl={7}>
            <Stack $align="flex-start" $w={87} $pt={2}>
              <ToolRow $h={22}><Slot $w={18}><Sigma /></Slot><ToolText $ls={0.25}>Autosuma</ToolText><Slot $w={18}><Caret /></Slot></ToolRow>
              <ToolRow $h={22}><Slot $w={18}><Fill /></Slot><ToolText>Rellenar</ToolText><Slot $w={9}><Caret /></Slot></ToolRow>
              <ToolRow $h={22}><Slot $w={18}><Eraser /></Slot><ToolText>Borrar</ToolText><Slot $w={9}><Caret /></Slot></ToolRow>
            </Stack>
            <BigColumn $w={54}><IconWrap><SortFilter /></IconWrap><BigLabel>Ordenar y<br />filtrar <Caret /></BigLabel></BigColumn>
            <BigColumn $w={68}><IconWrap><Binoculars /></IconWrap><BigLabel>Buscar y<br />seleccionar <Caret /></BigLabel></BigColumn>
          </GroupBody>
          <GroupLabel>Modificar</GroupLabel>
        </Group>
        <CollapseSlot><Svg w={10} h={7}><path d="M1 6l4-4 4 4" fill="none" stroke="#555" strokeWidth="1.5" /></Svg></CollapseSlot>
      </Ribbon>

      <FormulaArea>
        <NameBox>11F x 7C<Caret /></NameBox>
        <Dots>⋮</Dots>
        <FxBox>
          <Svg w={11} h={11}><path d="M1 1l9 9M10 1l-9 9" stroke="#c4c4c4" strokeWidth="1.4" /></Svg>
          <Svg w={13} h={11}><path d="M1 6l4 4 7-9" stroke="#c4c4c4" strokeWidth="1.4" fill="none" /></Svg>
          <FxText>fx</FxText>
        </FxBox>
        <FormulaInput>100<Svg w={10} h={6}><path d="M1 1l4 4 4-4" fill="none" stroke="#666" strokeWidth="1.4" /></Svg></FormulaInput>
      </FormulaArea>

      <SheetArea>
        <GridArea>
          <HeaderRow>
            <Corner><Svg w={18} h={18}><path d="M18 0v18H0z" fill="#e0e0e0" /></Svg></Corner>
            {columns.map((c, i) => <ColHead key={c} $sel={i >= 1 && i <= 7}>{c}</ColHead>)}
            <ColHead />
          </HeaderRow>
          <GridBody>
            {rows.map(([n, vals, note, bold]) => <SheetRowView key={n} n={n} vals={vals} note={note} bold={bold} />)}
          </GridBody>
          <Selection><Handle /></Selection>
          <CursorPlus viewBox="0 0 15 15"><path d="M5 1h5v4h4v5h-4v4H5v-4H1V5h4z" fill="#fff" stroke="#333" /></CursorPlus>
        </GridArea>
        <VScroll>
          <ScrollButton><UpTri /></ScrollButton>
          <Thumb />
          <ScrollButton><DownTri /></ScrollButton>
        </VScroll>
      </SheetArea>

      <SheetTabs>
        <NavArrows><LeftTri /><RightTri /></NavArrows>
        <SheetTab $w={96}>INVENTARIO</SheetTab>
        <SheetTab $w={69}>VENTAS</SheetTab>
        <SheetTab $w={70}>COSTOS</SheetTab>
        <SheetTab $w={76}>FACTURA</SheetTab>
        <HScroll><HEnd><RightTri $c="#666" /></HEnd></HScroll>
      </SheetTabs>

      <Status>
        LISTO
        <Spacer />
        <StatusStat>PROMEDIO: 1793.8104</StatusStat>
        <Slot $w={25} />
        <StatusStat>RECUENTO: 77</StatusStat>
        <Slot $w={18} />
        <StatusStat>SUMA: 137726.04</StatusStat>
        <Slot $w={28} />
        <ViewButton $active><Svg w={13} h={12}><path d="M.5.5h12v11H.5zM.5 4h12M.5 8h12M4.5.5v11M8.5.5v11" fill="none" stroke="#fff" /></Svg></ViewButton>
        <ViewButton><Svg w={13} h={12}><path d="M.5.5h12v11H.5z" fill="none" stroke="#fff" /><path d="M3.5 3h6v6h-6zM5 5h3M5 7h3" fill="none" stroke="#fff" strokeWidth=".8" /></Svg></ViewButton>
        <ViewButton><Svg w={13} h={12}><path d="M.5.5h12v11H.5z" fill="none" stroke="#fff" /><path d="M2 1h4v6H2zM7 1h4v4H7z" fill="#fff" /></Svg></ViewButton>
        <Slot $w={5} />
        <ZoomSign $w={4}>-</ZoomSign>
        <Slider><SliderTick /><SliderKnob /></Slider>
        <ZoomSign $w={7}>+</ZoomSign>
        <Slot $w={14} />
        <ZoomLevel>145%</ZoomLevel>
        <Slot $w={8} />
      </Status>

      <Taskbar>
        <StartBtn><Svg w={15} h={15}><path d="M0 2l6.3-1v6H0zM7.2.9L15 0v7H7.2zM0 8h6.3v6L0 13zM7.2 8H15v7l-7.8-1z" fill="#fff" /></Svg></StartBtn>
        <SearchBox>
          <Svg w={17} h={17}><circle cx="10.5" cy="6.5" r="5" fill="none" stroke="#333" strokeWidth="1.3" /><path d="M7 10.5L1 16" stroke="#333" strokeWidth="1.5" /></Svg>
          Type here to search
        </SearchBox>
        <TaskItem $w={45}><Svg w={15} h={15}><circle cx="7.5" cy="7.5" r="6" fill="none" stroke="#fff" strokeWidth="2" /></Svg></TaskItem>
        <TaskItem $w={46}><Svg w={16} h={15}><path d="M1 3.5h10v8H1zM1 1h10M1 14h10M14 2v3M14 7v7" fill="none" stroke="#ddd" strokeWidth="1.2" /></Svg></TaskItem>
        <TaskItem $w={48}><Svg w={21} h={18}><path d="M0 2h8l2 2h11v14H0z" fill="#f2c14e" /><rect x="7" y="11" width="7" height="7" fill="#3f88c5" /><rect x="0" y="5" width="21" height="2" fill="#f7dd96" /></Svg></TaskItem>
        <TaskItem $w={46}><Svg w={18} h={18}><path d="M2 10c0-5 3-9 8-9 4 0 7 3 7 7v2H6c0 3 3 5 6 4 2 0 3-1 4-1v3c-2 1-3 1-5 1-5 0-9-2-9-7zM6 7h7c0-2-1-3-3-3S6 5 6 7z" fill="#0a78d4" /></Svg></TaskItem>
        <TaskItem $w={46} $open><Svg w={20} h={20}><circle cx="10" cy="10" r="10" fill="#ea4335" /><path d="M10 10L1.5 15A10 10 0 0 0 11 20z" fill="#34a853" /><path d="M10 5h8.8A10 10 0 0 1 11 20z" fill="#fbbc05" /><circle cx="10" cy="10" r="5" fill="#fff" /><circle cx="10" cy="10" r="3.7" fill="#4285f4" /></Svg></TaskItem>
        <TaskItem $w={46} $open><Svg w={21} h={20}><rect x="7" y="1" width="14" height="18" fill="#fff" /><path d="M12 5h7M12 8h7M12 11h7M12 14h7" stroke="#2b579a" /><rect y="2" width="13" height="16" fill="#2b579a" /><text x="2" y="13" fontSize="9" fontWeight="700" fill="#fff" fontFamily="Open Sans">W</text></Svg></TaskItem>
        <TaskItem $w={46} $open><Svg w={21} h={20}><rect x="7" y="1" width="14" height="18" fill="#fbe5dc" /><path d="M12 12h7M12 15h7" stroke="#c9482b" /><circle cx="16" cy="6" r="3" fill="#c9482b" /><rect y="2" width="13" height="16" fill="#d24726" /><text x="3" y="14" fontSize="10" fontWeight="700" fill="#fff" fontFamily="Open Sans">P</text></Svg></TaskItem>
        <TaskItem $w={44} $active $open><Svg w={21} h={20}><rect x="9" y="1" width="12" height="18" fill="#1f2524" stroke="#ddd" strokeWidth=".7" /><path d="M11 5h8M11 9h8M11 13h8M15 2v16" stroke="#ddd" /><rect y="2" width="10" height="16" fill="#1e7145" /><text x="1.5" y="14" fontSize="10" fontWeight="700" fill="#fff" fontFamily="Open Sans">X</text></Svg></TaskItem>
        <TaskItem $w={48} $open><Svg w={21} h={21}><rect width="21" height="21" fill="#2f9ae0" /><path d="M0 15l7-7 6 6 3-2 5 5v4H0z" fill="#1656a8" /><circle cx="16" cy="5" r="2" fill="#fff" /></Svg></TaskItem>
        <Tray>
          <Slot $w={24}><Svg w={12} h={7}><path d="M1 6l5-5 5 5" fill="none" stroke="#ddd" strokeWidth="1.3" /></Svg></Slot>
          <Slot $w={24}><Svg w={16} h={10}><path d="M3 10a3 3 0 0 1 0-6 5 5 0 0 1 9-1 3.5 3.5 0 0 1 1 7z" fill="#ddd" /></Svg></Slot>
          <Slot $w={18}><Svg w={12} h={18}><rect x="3" y="0" width="6" height="12" rx="3" fill="#ddd" /><path d="M1 9a5 5 0 0 0 10 0M6 14v3M3 17h6" fill="none" stroke="#ddd" /></Svg></Slot>
          <Slot $w={28}><Svg w={15} h={11}><rect x="3" y="3" width="11" height="7" fill="none" stroke="#ddd" /><rect x="5" y="4" width="8" height="5" fill="#ddd" /><path d="M1 1v4M4 1v2M0 4h5" stroke="#ddd" /></Svg></Slot>
          <Slot $w={20}><Svg w={13} h={11}><path d="M1 10a9 9 0 0 1 11-9M4 10a6 6 0 0 1 8-6M7 10a3 3 0 0 1 5-3" fill="none" stroke="#aaa" /></Svg></Slot>
          <Slot $w={22}><Svg w={16} h={12}><path d="M1 4h2l3-3v10L3 8H1z" fill="none" stroke="#ddd" /><path d="M9 3a4 4 0 0 1 0 6M11 1.5a6 6 0 0 1 0 9" fill="none" stroke="#ddd" /></Svg></Slot>
          <Slot $w={4} />
          <Eng>ENG</Eng>
          <Clock>7:21 PM<br />9/26/2020</Clock>
          <TaskItem $w={41} $pr={9}><Svg w={16} h={15}><path d="M0 0h16v11H5l-3 4v-4H0z" fill="#e6e6e6" /><path d="M3 3h10M3 6h10" stroke="#333" /></Svg><NotifBadge>2</NotifBadge></TaskItem>
        </Tray>
      </Taskbar>

      <Cast>
        <CastPause><PauseBar /><PauseBar /></CastPause>
        <CastText>Screencastify - Screen Video Recorder is sharing your screen.</CastText>
        <StopButton>Stop sharing</StopButton>
        <HideLink>Hide</HideLink>
      </Cast>
    </Shell>
  );
}
